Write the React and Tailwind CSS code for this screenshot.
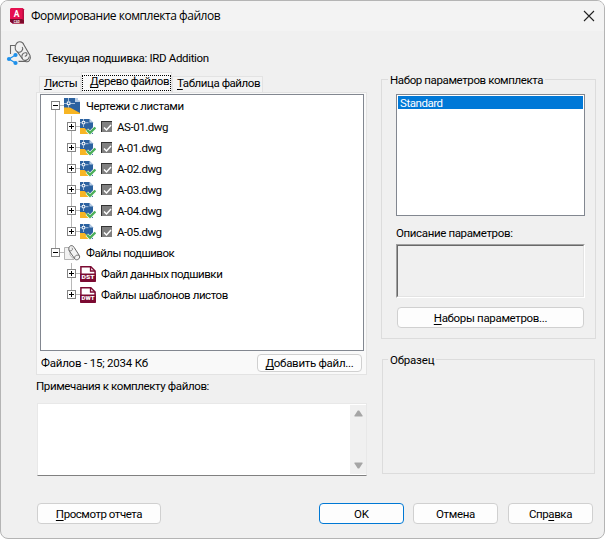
import clsx from "clsx";

const drawings = ["AS-01.dwg", "A-01.dwg", "A-02.dwg", "A-03.dwg", "A-04.dwg", "A-05.dwg"];

function AppLogo() {
  return (
    <svg width="16" height="17" viewBox="0 0 16 17">
      <path d="M2 0H13.5L15 1.5V15.5H3.5L1 13.5V1Z" fill="#e51050" />
      <path d="M1 11H15V15.5H3.5L1 13.5Z" fill="#7d0a2c" />
      <path d="M13.5 0L15 1.5V12H13.5Z" fill="#b50d40" />
      <text x="7.7" y="8.8" fontSize="8.5" fontWeight="700" fill="#fff" textAnchor="middle" fontFamily="Roboto, sans-serif">A</text>
      <text x="7.7" y="14.6" fontSize="3" fontWeight="700" fill="#fff" textAnchor="middle" fontFamily="Roboto, sans-serif">CAD</text>
    </svg>
  );
}

function SheetSetIcon() {
  return (
    <svg width="26" height="26" viewBox="0 0 26 26" fill="none">
      <g stroke="#666" strokeWidth="1.1">
        <path d="M4.5 13V4.5H9.5" />
        <path d="M9.5 4.5C11 -.5 16.5 -.5 18 4L24 14.5C25.5 18.5 22.5 21.8 19.5 20.4H12.5" />
        <path d="M9.5 4.5C8.5 8 10 10 11.5 11L16.5 18C18.5 20.8 23 19 23.3 15.5" />
        <path d="M11.5 11C15 12.3 18 8.5 16.2 6" />
        <path d="M16.5 18C14.5 14.5 17 11.2 20.2 11.8C22 12.8 20.5 15.5 18.8 15" />
      </g>
      <path d="M9.5 14L3 18L9.5 22" stroke="#1e90ea" strokeWidth="1.2" />
      <g fill="#1e90ea">
        <circle cx="9.5" cy="14" r="2.1" />
        <circle cx="3" cy="18" r="2.1" />
        <circle cx="9.5" cy="22" r="2.1" />
      </g>
    </svg>
  );
}

function DrawingsIcon() {
  return (
    <svg width="16" height="16" viewBox="0 0 16 16">
      <path d="M0 0H11L16 4V16H0Z" fill="#2c62a0" />
      <path d="M11 0V4H16V2.5H14V0Z" fill="#b9cee6" />
      <path d="M0 9.5H6L16 15V16H0Z" fill="#f7b524" />
      <path d="M4.5 0V3.5M4.5 6.5V9.5M0 5.5H3M6 5.5H11" stroke="#c9d8ea" strokeWidth=".8" />
      <rect x="3.3" y="4" width="2.6" height="2.6" fill="#2c62a0" stroke="#fff" strokeWidth=".9" />
    </svg>
  );
}

function DwgIcon() {
  return (
    <svg width="16" height="16" viewBox="0 0 16 16">
      <path d="M0 0H9.5L13 3.5V15H0Z" fill="#2c62a0" />
      <path d="M9.5 0V3.5H13Z" fill="#b9cee6" />
      <path d="M0 9H4.5L11 15H0Z" fill="#f7b524" />
      <path d="M3.5 0V2.2M3.5 5.2V8M0 3.7H2M5 3.7H8.5" stroke="#c9d8ea" strokeWidth=".8" />
      <rect x="2.3" y="2.4" width="2.4" height="2.4" fill="#2c62a0" stroke="#fff" strokeWidth=".8" />
      <path d="M6.8 10.8L10 14L15.3 8.6" stroke="#fff" strokeWidth="3.6" fill="none" />
      <path d="M7 10.9L10 13.9L15.4 8.5" stroke="#4caf5a" strokeWidth="2.4" fill="none" />
    </svg>
  );
}

function SheetFilesIcon() {
  return (
    <svg width="17" height="16" viewBox="0 0 17 16" fill="none">
      <path d="M.5 2.5H6V10L10 14.5H.5Z" fill="#f1f1f1" stroke="#b4b4b4" />
      <path d="M4.8 4C4.8 -.2 9 -.2 10.2 2.5L15.5 10.8C16.5 14 12.5 16 10.8 14L5 5.5Z" fill="#f3f3f3" stroke="#666" />
      <path d="M5 5.5C7.5 6.8 9.3 4.5 8 2.8M10.8 14C9.8 11.3 12.5 9.3 14.8 10.5" stroke="#777" />
    </svg>
  );
}

function TypeIcon({ label }) {
  return (
    <svg width="16" height="16" viewBox="0 0 16 16">
      <path d="M.9 8V.8H10.8L15.1 5V8M.9 13V15.2H15.1V13" fill="#fff" stroke="#7b0a32" strokeWidth="1.5" />
      <path d="M10.5 .8V5H15.1" fill="none" stroke="#7b0a32" strokeWidth="1.3" />
      <rect y="7.5" width="16" height="7.5" fill="#7b0a32" />
      <text x="8" y="13.3" fontSize="5.8" fontWeight="900" fill="#fff" textAnchor="middle" textLength="13" lengthAdjust="spacingAndGlyphs" fontFamily="Roboto, sans-serif">
        {label}
      </text>
    </svg>
  );
}

function Expander({ open }) {
  return (
    <svg className="shrink-0" width="9" height="9" viewBox="0 0 9 9" shapeRendering="crispEdges">
      <rect x=".5" y=".5" width="8" height="8" fill="#fff" stroke="#848484" />
      <path d={open ? "M2 4.5H7" : "M2 4.5H7M4.5 2V7"} stroke="#000" />
    </svg>
  );
}

function CheckMark() {
  return (
    <span className="ml-[5px] flex h-[11px] w-[11px] shrink-0 items-center justify-center border-t border-l border-[#333] bg-[#808080]">
      <svg width="9" height="9" viewBox="0 0 9 9" fill="none">
        <path d="M1 4.5L3.5 7L8 2" stroke="#fff" strokeWidth="1.5" />
      </svg>
    </span>
  );
}

function RootRow({ icon, children, className }) {
  return (
    <div className="flex h-[21px] items-center pl-[10px]">
      <Expander open />
      <span className="h-px w-1 bg-[#b8b8b8]" />
      <span className="w-[17px] shrink-0">{icon}</span>
      <span className={clsx("ml-[5px]", className)}>{children}</span>
    </div>
  );
}

function ChildRow({ icon, checked, last, children, className }) {
  return (
    <div className="flex h-[21px] items-center pl-[26px]">
      <span className="flex h-[21px] w-[9px] flex-col items-center">
        <span className="h-[6px] w-px bg-[#b8b8b8]" />
        <Expander />
        {!last && <span className="h-[6px] w-px bg-[#b8b8b8]" />}
      </span>
      <span className="h-px w-1 bg-[#b8b8b8]" />
      <span className="w-4 shrink-0">{icon}</span>
      {checked && <CheckMark />}
      <span className={clsx("ml-[5px]", className)}>{children}</span>
    </div>
  );
}

function Button({ children, className }) {
  return (
    <button className={clsx("flex items-center justify-center rounded-[4px] border bg-[#fdfdfd]", className)}>
      <span>{children}</span>
    </button>
  );
}

function Key({ children }) {
  return <span className="underline decoration-1 underline-offset-2">{children}</span>;
}

function FileTree() {
  return (
    <div className="mt-px ml-[3px] h-[257px] w-[324px] border border-[#828790] bg-white">
      <RootRow icon={<DrawingsIcon />} className="tracking-[-0.4px]">Чертежи с листами</RootRow>
      <div className="relative">
        <span className="absolute -top-[6px] left-[14px] h-[138px] w-px bg-[#b8b8b8]" />
        {drawings.map((name, i) => (
          <ChildRow key={name} icon={<DwgIcon />} checked last={i === drawings.length - 1} className="tracking-[-0.45px]">
            {name}
          </ChildRow>
        ))}
      </div>
      <RootRow icon={<SheetFilesIcon />} className="tracking-[-0.5px]">Файлы подшивок</RootRow>
      <ChildRow icon={<TypeIcon label="DST" />} className="tracking-[-0.45px]">Файл данных подшивки</ChildRow>
      <ChildRow icon={<TypeIcon label="DWT" />} last className="tracking-[-0.42px]">Файлы шаблонов листов</ChildRow>
    </div>
  );
}

function LeftColumn() {
  return (
    <div className="w-[331px] shrink-0">
      {/* tabs */}
      <div className="flex h-[20px] items-end pl-[3px]">
        <div className="h-[16px] w-[42px] border border-b-0 border-[#e3e3e3] bg-[#f3f3f3] pl-1 leading-[13px] tracking-[-0.4px]">
          <Key>Л</Key>исты
        </div>
        <div className="h-[20px] w-[91px] border border-b-0 border-[#e3e3e3] bg-[#f9f9f9] pt-[2px]">
          <div className="h-[16px] w-[89px] border border-dotted border-black pl-[7px] leading-[11px] tracking-[-0.4px]">
            <Key>Д</Key>ерево файлов
          </div>
        </div>
        <div className="h-[16px] w-[91px] border border-b-0 border-[#e3e3e3] bg-[#f3f3f3] pl-[4px] leading-[13px] tracking-[-0.43px]">
          <Key>Т</Key>аблица файлов
        </div>
      </div>
      <div className="h-[283px] border border-[#e3e3e3] bg-[#f9f9f9]">
        <FileTree />
        <div className="flex items-center justify-between pt-[3px] pr-1 pl-1">
          <span className="tracking-[-0.2px]">Файлов - 15; 2034 Кб</span>
          <Button className="h-[18px] w-[105px] border-[#d0d0d0] tracking-[-0.28px]">
            <Key>Д</Key>обавить файл...
          </Button>
        </div>
      </div>
      <div className="mt-[3px] tracking-[-0.38px]">Примечания к комплекту файлов:</div>
      <div className="mt-[9px] ml-px flex h-[73px] justify-end border border-[#e8e8e8] border-b-[#808080] bg-white py-px">
        <div className="flex w-4 flex-col items-center justify-between bg-[#f0f0f0] py-[5px]">
          <svg width="9" height="7" viewBox="0 0 9 7">
            <path d="M3.8 .5H5.2L8.5 5.5V6.5H.5V5.5Z" fill="#a5a5a5" />
          </svg>
          <svg width="9" height="7" viewBox="0 0 9 7">
            <path d="M.5 .5H8.5V1.5L5.2 6.5H3.8L.5 1.5Z" fill="#a5a5a5" />
          </svg>
        </div>
      </div>
    </div>
  );
}

function RightColumn() {
  return (
    <div className="ml-[14px] w-[215px] pt-[7px]">
      <div className="h-[260px] border border-[#dcdcdc] px-[14px]">
        <div className="-mt-[7px] -ml-[8px] h-[15px] w-fit bg-[#f0f0f0] px-[2px] leading-[15px] tracking-[-0.39px]">
          Набор параметров комплекта
        </div>
        <div className="mt-[6px] h-[122px] w-[189px] border border-[#828790] bg-white p-px">
          <div className="h-[13px] bg-[#0078d7] pl-[2px] leading-[14px] tracking-[-0.45px] text-white">Standard</div>
        </div>
        <div className="mt-[9px] tracking-[-0.36px]">Описание параметров:</div>
        <div className="mt-[3px] h-[54px] w-[189px] border border-[#a0a0a0] border-r-white border-b-white">
          <div className="h-full border border-[#696969] border-r-[#e3e3e3] border-b-[#e3e3e3]" />
        </div>
        <Button className="mt-[9px] ml-px h-[21px] w-[187px] border-[#d0d0d0] tracking-[-0.33px]">
          <Key>Н</Key>аборы параметров...
        </Button>
      </div>
      <div className="mt-[20px] ml-px h-[115px] w-[213px] border border-[#dcdcdc] px-[5px]">
        <div className="-mt-[7px] h-[15px] w-fit bg-[#f0f0f0] px-[2px] leading-[15px] tracking-[-0.2px]">Образец</div>
      </div>
    </div>
  );
}

export default function App() {
  return (
    <div className="h-[539px] w-[605px] bg-white">
      <div className="flex h-full flex-col overflow-hidden rounded-[8px] border border-[#b4b4b4] bg-[#f0f0f0] font-['Roboto',sans-serif] text-[11.5px] leading-[16px] whitespace-nowrap text-black">
        <div className="flex h-[30px] shrink-0 items-center bg-[#f3f3f3] pl-[8px]">
          <AppLogo />
          <span className="ml-[6px] font-['Open_Sans',sans-serif] text-[12px] tracking-[-0.46px]">Формирование комплекта файлов</span>
          <svg className="mr-[9px] ml-auto" width="12" height="12" viewBox="0 0 12 12">
            <path d="M1 1L11 11M11 1L1 11" stroke="#222" strokeWidth="1.1" />
          </svg>
        </div>
        <div className="flex h-[40px] pt-[10px] pl-[5px]">
          <SheetSetIcon />
          <span className="mt-[9px] ml-[14px] tracking-[-0.33px]">Текущая подшивка: IRD Addition</span>
        </div>
        <div className="flex pt-px pl-[35px]">
          <LeftColumn />
          <RightColumn />
        </div>
        <div className="mt-auto mb-[14px] flex pl-[36px]">
          <Button className="h-[21px] w-[124px] border-[#d0d0d0] tracking-[-0.45px]">
            <Key>П</Key>росмотр отчета
          </Button>
          <Button className="ml-[158px] h-[21px] w-[85px] border-[#0078d4]">OK</Button>
          <Button className="ml-[9px] h-[21px] w-[85px] border-[#d0d0d0] tracking-[-0.35px]">Отмена</Button>
          <Button className="ml-[10px] h-[21px] w-[85px] border-[#d0d0d0] tracking-[-0.4px]">
            Спр<Key>а</Key>вка
          </Button>
        </div>
      </div>
    </div>
  );
}
